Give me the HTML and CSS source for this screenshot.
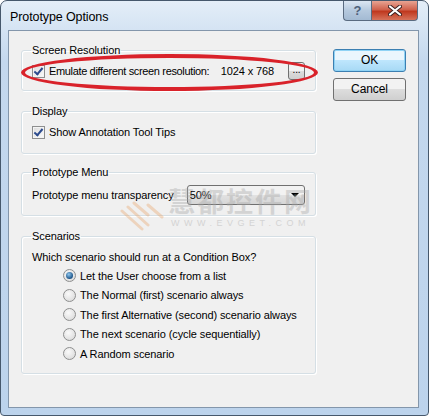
FILE: index.html
```html
<!DOCTYPE html>
<html lang="en">
<head>
    <meta charset="UTF-8">
    <title>Prototype Options</title>
    <link rel="stylesheet" href="styles.css">
</head>
<body>
<div class="window">
    <div class="titlebar">
        <span class="title">Prototype Options</span>
        <div class="caption">
            <span class="cap-btn help">?</span>
            <span class="cap-btn close">
                <svg width="14" height="11" viewBox="0 0 14 11"><path d="M2 1.5 L12 9.5 M12 1.5 L2 9.5" stroke="#3b2020" stroke-width="4" stroke-linecap="round"/><path d="M2 1.5 L12 9.5 M12 1.5 L2 9.5" stroke="#fff" stroke-width="2.2" stroke-linecap="round"/></svg>
            </span>
        </div>
    </div>
    <div class="client">
        <div class="groups">
            <fieldset class="group g-res">
                <legend>Screen Resolution</legend>
                <div class="row">
                    <span class="check on"></span>
                    <span class="res-label">Emulate different screen resolution:</span>
                    <span class="res-value">1024 x 768</span>
                    <span class="dots">...</span>
                    <div class="highlight"></div>
                </div>
            </fieldset>
            <fieldset class="group g-disp">
                <legend>Display</legend>
                <div class="row">
                    <span class="check on"></span>
                    <span>Show Annotation Tool Tips</span>
                </div>
            </fieldset>
            <fieldset class="group g-menu">
                <legend>Prototype Menu</legend>
                <div class="row">
                    <span class="menu-label">Prototype menu transparency</span>
                    <div class="select">
                        <span>50%</span>
                        <span class="arrow"></span>
                    </div>
                    <svg class="wm-logo" width="48" height="30" viewBox="0 0 48 30">
                        <path d="M4 10 L24 28 M10 6 L30 24 M16 2 L30 14 M30 4 L44 16" stroke="#e8a060" stroke-width="3" fill="none" stroke-linecap="round"/>
                    </svg>
                    <div class="watermark">
                        <span class="wm-cn">慧都控件网</span>
                        <span class="wm-en">WWW.EVGET.COM</span>
                    </div>
                </div>
            </fieldset>
            <fieldset class="group g-scen">
                <legend>Scenarios</legend>
                <div class="question">Which scenario should run at a Condition Box?</div>
                <ul class="radios">
                    <li><span class="radio on"></span>Let the User choose from a list</li>
                    <li><span class="radio"></span>The Normal (first) scenario always</li>
                    <li><span class="radio"></span>The first Alternative (second) scenario always</li>
                    <li><span class="radio"></span>The next scenario (cycle sequentially)</li>
                    <li><span class="radio"></span>A Random scenario</li>
                </ul>
            </fieldset>
        </div>
        <div class="buttons">
            <span class="btn default">OK</span>
            <span class="btn">Cancel</span>
        </div>
    </div>
</div>
</body>
</html>
```

FILE: styles.css
```css
body {
    margin: 0;
    background: #fff;
    font-family: "Liberation Sans", Arial, sans-serif;
    font-size: 11px;
    letter-spacing: -0.1px;
    color: #000;
    white-space: nowrap;
}
.window {
    width: 427px;
    height: 414px;
    border: 1px solid #46586c;
    border-radius: 7px 7px 4px 4px;
    background: linear-gradient(#e4eef8, #c4d8ee 60px, #bcd3ec);
    display: flex;
    flex-direction: column;
}
.titlebar {
    height: 29px;
    display: flex;
    justify-content: space-between;
    align-items: flex-start;
}
.title {
    font-size: 12.5px;
    margin: 9px 0 0 9px;
}
.caption {
    display: flex;
    margin-right: 10px;
}
.cap-btn {
    height: 19px;
    border: 1px solid #5a6b80;
    border-top: none;
    display: flex;
    align-items: center;
    justify-content: center;
}
.help {
    width: 27px;
    border-radius: 0 0 0 4px;
    background: linear-gradient(#dbe6f2, #b5c9de 50%, #a3bad3);
    color: #4d607a;
    font-weight: bold;
    font-size: 13px;
    border-right: none;
}
.close {
    width: 45px;
    border-radius: 0 0 4px 0;
    background: linear-gradient(#e8a493, #d0624d 45%, #c0391f 55%, #d6735b);
}
.client {
    flex: 1;
    margin: 0 9px 7px 7px;
    border: 1px solid #8396ab;
    background: #f0f0f0;
    display: flex;
    padding: 12px 0 0 12px;
}
.groups {
    width: 295px;
    display: flex;
    flex-direction: column;
}
.group {
    box-sizing: border-box;
    margin: 0;
    border: 1px solid #d5dfe5;
    border-radius: 3px;
    box-shadow: inset 1px 1px 0 #fff, 1px 1px 0 #fff;
    padding: 0 10px;
    min-width: 0;
}
.group legend {
    padding: 0 1px;
    margin-left: -1px;
    line-height: 14px;
}
.g-res { height: 48px; }
.g-disp { height: 50px; margin-top: 13px; }
.g-menu { height: 51px; margin-top: 11px; }
.g-scen { height: 145px; margin-top: 13px; }
.row {
    display: flex;
    align-items: center;
    height: 22px;
    margin-top: 3px;
    position: relative;
}
.g-menu .row { margin-top: 5px; }
.check {
    width: 11px;
    height: 11px;
    border: 1px solid #8e8f8f;
    background: linear-gradient(135deg, #dcdcdc, #fbfbfb);
    box-shadow: inset 0 0 0 1px #f4f4f4;
    margin-right: 4px;
    position: relative;
    flex: none;
}
.check.on::after {
    content: "";
    position: absolute;
    left: 3px;
    top: 0px;
    width: 3px;
    height: 7px;
    border: solid #2b4a8d;
    border-width: 0 2px 2px 0;
    transform: rotate(40deg);
}
.res-label {
    width: 173px;
    letter-spacing: -0.35px;
}
.res-value { width: 68px; }
.dots {
    width: 15px;
    height: 16px;
    border: 1px solid #707070;
    border-radius: 3px;
    background: linear-gradient(#f2f2f2 50%, #dddddd 50%, #cfcfcf);
    font-size: 10px;
    text-align: center;
    line-height: 14px;
}
.highlight {
    position: absolute;
    left: -11px;
    top: -6px;
    width: 289px;
    height: 29px;
    border: 4px solid #d9222a;
    border-radius: 50% / 50%;
}
.menu-label { width: 157px; }
.select {
    width: 116px;
    height: 18px;
    border: 1px solid #707070;
    border-radius: 3px;
    background: linear-gradient(#f2f2f2 50%, #e2e2e2 50%, #d6d6d6);
    display: flex;
    align-items: center;
    justify-content: space-between;
    padding-left: 2px;
}
.arrow {
    width: 0;
    height: 0;
    border-left: 4px solid transparent;
    border-right: 4px solid transparent;
    border-top: 4px solid #000;
    margin-right: 5px;
}
.wm-logo {
    position: absolute;
    left: 86px;
    top: 17px;
    opacity: 0.35;
}
.watermark {
    position: absolute;
    left: 136px;
    top: 1px;
    display: flex;
    flex-direction: column;
    align-items: center;
    color: #a9a9a9;
    opacity: 0.4;
}
.wm-cn {
    font-family: "Noto Sans CJK SC", sans-serif;
    font-size: 27px;
    font-weight: bold;
    letter-spacing: 2px;
    line-height: 32px;
}
.wm-en {
    font-size: 9px;
    letter-spacing: 4.5px;
    line-height: 11px;
    margin-top: 1px;
}
.question {
    margin-top: 6px;
    line-height: 16px;
}
.radios {
    list-style: none;
    margin: 1px 0 0 31px;
    padding: 0;
}
.radios li {
    display: flex;
    align-items: center;
    height: 19.5px;
}
.radio {
    width: 11px;
    height: 11px;
    border: 1px solid #8e8f8f;
    border-radius: 50%;
    background: radial-gradient(circle at 40% 35%, #fafafa, #d5d5d5);
    margin-right: 4px;
    position: relative;
}
.radio.on::after {
    content: "";
    position: absolute;
    left: 2px;
    top: 2px;
    width: 7px;
    height: 7px;
    border-radius: 50%;
    background: radial-gradient(circle at 40% 35%, #8fc7ef, #1c5387 70%);
}
.buttons {
    margin-left: 17px;
    padding-top: 6px;
    display: flex;
    flex-direction: column;
    gap: 6px;
}
.btn {
    width: 71px;
    height: 21px;
    border: 1px solid #707070;
    border-radius: 3px;
    background: linear-gradient(#f2f2f2 50%, #dddddd 50%, #cfcfcf);
    text-align: center;
    line-height: 21px;
    font-size: 12px;
}
.btn.default {
    border-color: #3c7fb1;
    background: linear-gradient(#eaf6fd 50%, #bee6fd 50%, #a7d9f5);
    box-shadow: inset 0 0 0 1px #8fd3f5;
}
```
